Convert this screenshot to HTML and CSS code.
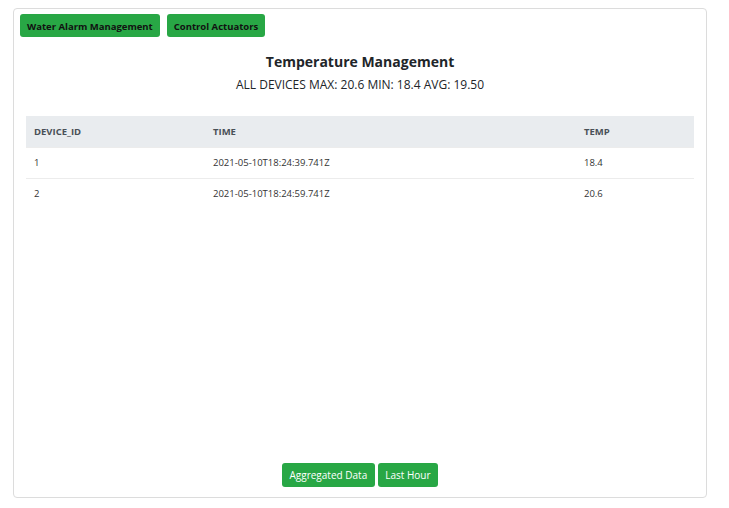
FILE: index.html
```html
<!DOCTYPE html>
<html>
<head>
<meta charset="utf-8">
<link rel="stylesheet" href="styles.css">
</head>
<body>
<div class="card">
  <div class="nav">
    <button class="btn btn-nav">Water Alarm Management</button>
    <button class="btn btn-nav">Control Actuators</button>
  </div>
  <div class="content">
    <h1 class="title">Temperature Management</h1>
    <p class="summary">ALL DEVICES MAX: 20.6 MIN: 18.4 AVG: 19.50</p>
    <table class="data">
      <colgroup>
        <col class="c1"><col class="c2"><col class="c3">
      </colgroup>
      <thead>
        <tr><th>DEVICE_ID</th><th>TIME</th><th>TEMP</th></tr>
      </thead>
      <tbody>
        <tr><td>1</td><td>2021-05-10T18:24:39.741Z</td><td>18.4</td></tr>
        <tr><td>2</td><td>2021-05-10T18:24:59.741Z</td><td>20.6</td></tr>
      </tbody>
    </table>
  </div>
  <div class="footer">
    <button class="btn btn-foot">Aggregated Data</button>
    <button class="btn btn-foot">Last Hour</button>
  </div>
</div>
</body>
</html>
```
FILE: styles.css
```css
* { box-sizing: border-box; }
html, body { margin: 0; background: #fff; }
body {
  padding: 8px 22px 10px 13px;
  font-family: "Open Sans", "Noto Sans", sans-serif;
  color: #212529;
}
.card {
  width: 694px;
  height: 490px;
  border: 1px solid #dcdcdc;
  border-radius: 4px;
  display: flex;
  flex-direction: column;
  padding: 5px 12px 10px 12px;
}
.nav {
  display: flex;
  gap: 7px;
  margin-left: -6px;
}
.btn {
  font-family: inherit;
  background: #28a745;
  border: none;
  border-radius: 3px;
  cursor: pointer;
}
.btn-nav {
  height: 23px;
  padding: 1px 7px 0;
  font-size: 9.5px;
  font-weight: 700;
  color: #111;
}
.content { flex: 1; }
.title {
  margin: 15px 0 0;
  text-align: center;
  font-size: 14px;
  font-weight: 700;
  line-height: 20px;
}
.summary {
  margin: 4px 0 0;
  text-align: center;
  font-size: 12px;
  line-height: 18px;
}
.data {
  margin-top: 22px;
  width: 100%;
  border-collapse: collapse;
  table-layout: fixed;
  font-size: 9.5px;
}
.c1 { width: 179px; }
.c2 { width: 371px; }
.data th {
  background: #e9ecef;
  color: #495057;
  font-weight: 700;
  text-align: left;
  height: 31px;
  padding: 0 8px;
}
.data td {
  height: 31px;
  padding: 0 8px;
  border-top: 1px solid #ececec;
  color: #333;
}
.footer {
  display: flex;
  justify-content: center;
  gap: 3px;
  margin-top: -1px;
}
.btn-foot {
  height: 24px;
  padding: 0 7.5px;
  font-size: 10px;
  color: #fff;
}
```
